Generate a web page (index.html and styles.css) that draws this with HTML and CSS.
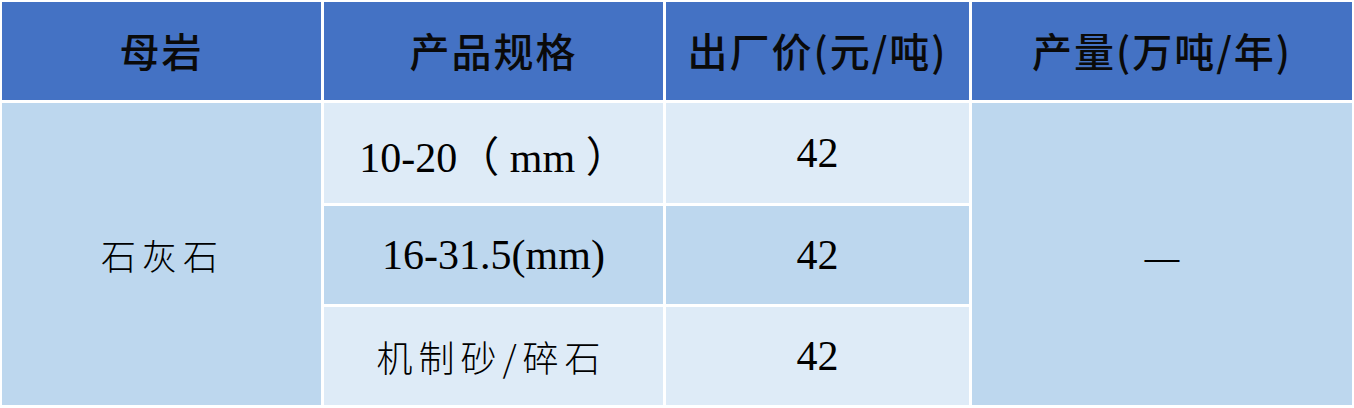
FILE: index.html
```html
<!DOCTYPE html>
<html lang="zh-CN">
<head>
<meta charset="utf-8">
<link rel="stylesheet" href="styles.css">
</head>
<body>
<div class="table">
  <div class="cell head">母岩</div>
  <div class="cell head">产品规格</div>
  <div class="cell head">出厂价(元/吨)</div>
  <div class="cell head">产量(万吨/年)</div>

  <div class="cell mid rock">石灰石</div>
  <div class="cell light num">10-20（ mm ）</div>
  <div class="cell light num">42</div>
  <div class="cell mid output">—</div>

  <div class="cell mid num">16-31.5(mm)</div>
  <div class="cell mid num">42</div>

  <div class="cell light cjk">机制砂/碎石</div>
  <div class="cell light num">42</div>
</div>
</body>
</html>
```

FILE: styles.css
```css
html, body {
  margin: 0;
  padding: 0;
  background: #ffffff;
}
body {
  width: 1354px;
  height: 408px;
  overflow: hidden;
}
.table {
  margin: 2px 0 0 2px;
  display: grid;
  grid-template-columns: 319px 339px 303px 380px;
  grid-template-rows: 98px 100px 98px 98px;
  column-gap: 3px;
  row-gap: 3px;
}
.cell {
  display: flex;
  align-items: center;
  justify-content: center;
  color: #000;
}
.head {
  background: #4472c4;
  font-family: "Noto Sans CJK SC", sans-serif;
  font-weight: 500;
  font-size: 40px;
  letter-spacing: 2px;
  color: #0a0a0a;
  padding-bottom: 2px;
}
.light {
  background: #deebf7;
}
.mid {
  background: #bdd7ee;
}
.num {
  font-family: "Liberation Serif", "Noto Sans CJK SC", serif;
  font-size: 42px;
}
.rock {
  grid-row: 2 / 5;
  grid-column: 1;
  font-family: "Noto Sans CJK SC", sans-serif;
  font-weight: 300;
  font-size: 35px;
  letter-spacing: 6px;
  padding-left: 2px;
}
.output {
  grid-row: 2 / 5;
  grid-column: 4;
  font-family: "Noto Sans CJK SC", sans-serif;
  font-weight: 300;
  font-size: 44px;
}
.cjk {
  font-family: "Noto Sans CJK SC", sans-serif;
  font-weight: 300;
  font-size: 36px;
  letter-spacing: 6px;
  padding-right: 4px;
}
```
